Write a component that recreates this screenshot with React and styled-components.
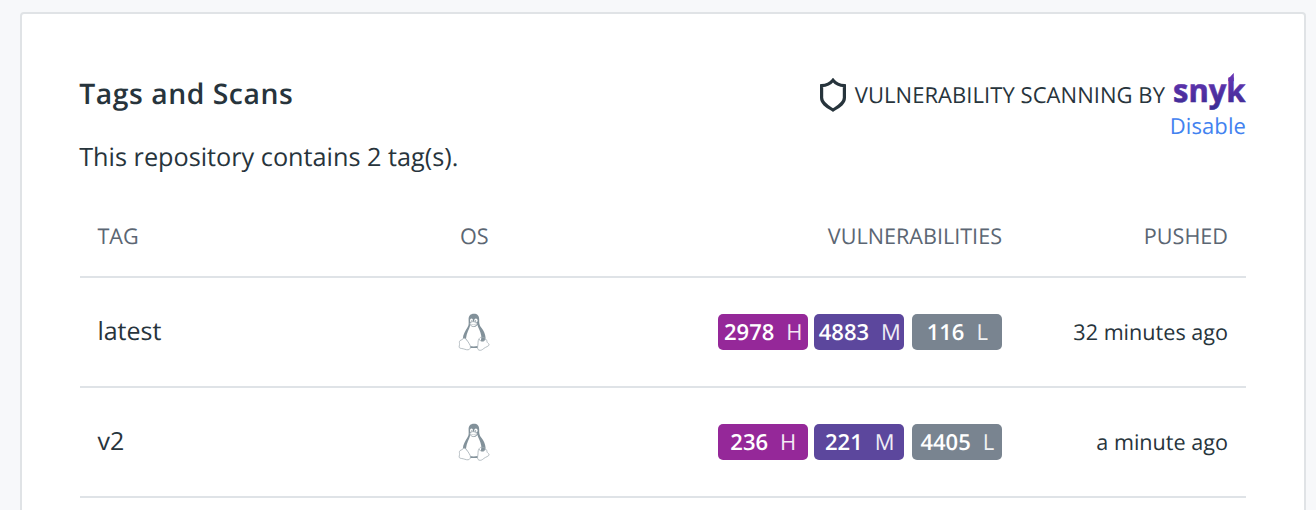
import React from "react";
import styled, { createGlobalStyle } from "styled-components";

const GlobalStyle = createGlobalStyle`
  * { box-sizing: border-box; }
  body {
    margin: 0;
    height: 510px;
    overflow: hidden;
    background: #f7f8fa;
    color: #27343c;
    font-family: "Open Sans", "Liberation Sans", sans-serif;
    text-rendering: geometricPrecision;
    -webkit-font-smoothing: antialiased;
  }
`;

const Page = styled.main`
  height: 510px;
  padding: 12px 10px 0 20px;
  overflow: hidden;
`;

const Card = styled.section`
  height: 560px;
  padding: 58px;
  background: #fff;
  border: 2px solid #e0e3e6;
  border-radius: 4px;
`;

const CardHeader = styled.header`
  display: flex;
  justify-content: space-between;
  height: 134px;
`;

const Intro = styled.div`
  margin-left: -0.8px;
`;

const Title = styled.h2`
  margin: 2px 0 0;
  font-size: 28.3px;
  font-weight: 600;
  line-height: 40px;
  letter-spacing: 0.55px;
`;

const Summary = styled.p`
  margin: 26px 0 0;
  font-size: 25.25px;
  line-height: 34px;
`;

const Scanning = styled.div`
  display: flex;
  flex-direction: column;
  align-items: flex-end;
`;

const Provider = styled.div`
  display: flex;
  align-items: flex-start;
  height: 39px;
`;

const ProviderLabel = styled.span`
  margin: 8px 8px 0 9px;
  font-size: 22px;
  line-height: 30px;
  letter-spacing: 0.05px;
  white-space: nowrap;
`;

const ShieldSvg = styled.svg`
  width: 26px;
  height: 34px;
  margin-top: 6px;
`;

const SnykSvg = styled.svg`
  width: 73px;
  height: 40px;
  overflow: visible;
`;

const DisableLink = styled.a`
  color: #4282f0;
  font-size: 22px;
  line-height: 30px;
  letter-spacing: 0.1px;
`;

const Table = styled.div`
  display: flex;
  flex-direction: column;
`;

const Row = styled.div`
  display: grid;
  grid-template-columns: 316px 122px 1fr 226px;
  align-items: center;
  height: ${(p) => (p.$head ? 72 : 110)}px;
  padding: ${(p) => (p.$head ? "0 18px 8px 17.4px" : "0 18px 0 17.4px")};
  border-bottom: 2px solid #dfe3e7;
  color: ${(p) => (p.$head ? "#5b6673" : "inherit")};
  font-size: 21.6px;
  line-height: 30px;
`;

const Cell = styled.div`
  display: flex;
  justify-content: ${(p) => p.$align || "flex-start"};
`;

const TagName = styled.span`
  padding-bottom: 2px;
  font-size: 25px;
  line-height: 34px;
`;

const Pushed = styled.span`
  padding-top: 2px;
`;

const Badges = styled.div`
  display: grid;
  grid-template-columns: 90px 90px 92px;
  column-gap: 6px;
`;

const severityColors = { H: "#952899", M: "#5c479d", L: "#798490" };

const Badge = styled.span`
  display: flex;
  align-items: center;
  justify-content: center;
  gap: 12px;
  width: 90px;
  height: 36px;
  padding: 0 0 1px ${(p) => (p.$level === "M" ? 1.6 : 0.6)}px;
  margin-left: ${(p) => (p.$level === "L" ? 2 : 0)}px;
  border-radius: 5px;
  background: ${(p) => severityColors[p.$level]};
  color: #fff;
  font-size: 22px;
`;

const Count = styled.b`
  font-weight: 600;
`;

const Level = styled.span`
  opacity: 0.9;
`;

const TuxSvg = styled.svg`
  width: 32px;
  height: 38px;
`;

const Shield = () => (
  <ShieldSvg viewBox="0 0 26 34" fill="none" stroke="#27343c" strokeWidth="3.2">
    <path d="M13 2.2C10.700 5 6 7.400 1.600 7.700v12.100c0 6.100 7.100 9.400 11.400 12.200 4.300-2.800 11.400-6.100 11.400-12.200V7.700C20 7.400 15.300 5 13 2.200Z" />
  </ShieldSvg>
);

const SnykLogo = () => (
  <SnykSvg viewBox="0 0 73 40">
    <defs>
      <linearGradient id="snyk-ink" gradientUnits="userSpaceOnUse" x1="0" y1="1" x2="0" y2="38">
        <stop offset="0" stopColor="#6a35b5" />
        <stop offset="1" stopColor="#392b92" />
      </linearGradient>
    </defs>
    <g fill="url(#snyk-ink)" stroke="url(#snyk-ink)" strokeWidth="0.6">
      <text x="0" y="29.8" fontSize="32" fontWeight="700" textLength="72.5" lengthAdjust="spacingAndGlyphs">
        snyk
      </text>
      <path d="M55.700 9V6.800L60.500 1.500V9Z" />
    </g>
  </SnykSvg>
);

const Tux = () => (
  <TuxSvg viewBox="0 0 32 38">
    <path
      fill="#82919a"
      d="M15.900.7c-3.500 0-5.300 2.200-5.300 5.500 0 3.700.6 5.500-1.200 8.400-2 3.300-4.300 7-4.600 11.100l1.600 4 5.300 5.200h8l5.700-4.700 2.200-5.100c-.2-4.100-1.900-7.300-4.200-10.400-2.300-3-2.200-4.600-2.200-8.200C21.200 2.700 19.300.7 15.900.7Z"
    />
    <path fill="#fff" d="M12.300 12c1.800 2.600 5.500 2.500 7-.3 1 3.400 3.200 6.500 3.900 10.800.6 4.100-1.200 8.800-3.700 10.500-2.300.6-5.500.6-7.500 0L8 25.500c.4-5.300 3.300-9.200 4.300-13.500Z" />
    <ellipse cx="13.500" cy="7.600" rx="1.500" ry="2" fill="#fff" />
    <ellipse cx="17.900" cy="7.600" rx="1.700" ry="2" fill="#fff" />
    <circle cx="13.900" cy="8" r=".75" fill="#82919a" />
    <circle cx="17.500" cy="8" r=".75" fill="#82919a" />
    <path fill="#fff" stroke="#a5afb5" strokeWidth=".6" d="M11.800 10.300c1.600-1.500 3.200-2 4.700-1.200 1 .5 2.300.9 2.700 1.500-.2 1.800-2.300 2.600-3.500 3-1.500 0-3.700-1.300-3.900-3.300Z" />
    <path fill="none" stroke="#a5afb5" strokeWidth=".5" d="M12 10.800c2.400 1.300 4.600 1 6.900-.1" />
    <path fill="#fff" stroke="#a5afb5" strokeWidth=".8" strokeLinejoin="round" d="M5.200 25.600c-1 1.600-3.500 1.300-3.800 3.100-.2 1.100.5 2.500-.1 4.200-.5 1.500 0 2.300 1.900 2.500 2.700.3 4.900 1.600 6.900 1.400 2-.3 2.800-2.200 2.200-4-1-2.400-3.500-6.200-5.100-7.300-.8-.5-1.600-.5-2 .1Z" />
    <path fill="#fff" stroke="#a5afb5" strokeWidth=".8" strokeLinejoin="round" d="M20.800 26.300c-1.100 1.500-.5 4.100-1 6.200-.4 1.700-.6 3.900 1.100 4.600 1.800.8 3.700-.5 5-1.700 1.500-1.300 5.300-2.300 5.200-3.600-.1-1.500-2-1.600-2.200-3.500-.1-1.100-.3-1.900-1.400-2-.6 1.400-2.300 2.400-4 1.900-1.200-.3-1.700-1.200-2.700-1.900Z" />
    <path fill="none" stroke="#a5afb5" strokeWidth=".7" d="M21 27c0-2.500 2-3.300 4.100-2.600 1.200.3 2.200.6 2.400 1.900" />
  </TuxSvg>
);

const tags = [
  { name: "latest", counts: { H: 2978, M: 4883, L: 116 }, pushed: "32 minutes ago" },
  { name: "v2", counts: { H: 236, M: 221, L: 4405 }, pushed: "a minute ago" },
];

export default function App() {
  return (
    <Page>
      <GlobalStyle />
      <Card>
        <CardHeader>
          <Intro>
            <Title>Tags and Scans</Title>
            <Summary>This repository contains 2 tag(s).</Summary>
          </Intro>
          <Scanning>
            <Provider>
              <Shield />
              <ProviderLabel>VULNERABILITY SCANNING BY</ProviderLabel>
              <SnykLogo />
            </Provider>
            <DisableLink>Disable</DisableLink>
          </Scanning>
        </CardHeader>
        <Table>
          <Row $head>
            <Cell>TAG</Cell>
            <Cell $align="center">OS</Cell>
            <Cell $align="flex-end">VULNERABILITIES</Cell>
            <Cell $align="flex-end">PUSHED</Cell>
          </Row>
          {tags.map((tag) => (
            <Row key={tag.name}>
              <Cell><TagName>{tag.name}</TagName></Cell>
              <Cell $align="center"><Tux /></Cell>
              <Cell $align="flex-end">
                <Badges>
                  {Object.entries(tag.counts).map(([level, count]) => (
                    <Badge key={level} $level={level}>
                      <Count>{count}</Count>
                      <Level>{level}</Level>
                    </Badge>
                  ))}
                </Badges>
              </Cell>
              <Cell $align="flex-end"><Pushed>{tag.pushed}</Pushed></Cell>
            </Row>
          ))}
        </Table>
      </Card>
    </Page>
  );
}
